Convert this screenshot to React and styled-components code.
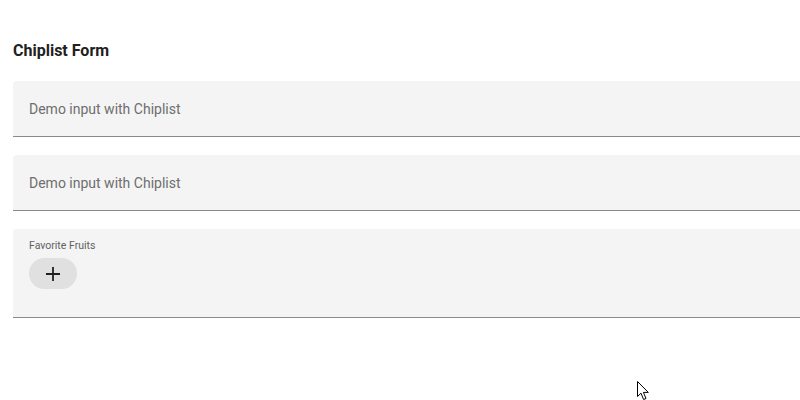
import React from 'react';
import styled, { createGlobalStyle } from 'styled-components';

const GlobalStyle = createGlobalStyle`
  html, body {
    margin: 0;
    padding: 0;
    background: #ffffff;
    overflow: hidden;
  }
  body {
    font-family: Roboto, "Liberation Sans", sans-serif;
  }
`;

const Page = styled.div`
  position: relative;
  width: 800px;
  height: 400px;
  padding: 39px 0 0 13px;
  box-sizing: border-box;
`;

const Title = styled.h1`
  margin: 0 0 18px;
  font-size: 16px;
  line-height: 24px;
  font-weight: 700;
  color: #212121;
`;

const Form = styled.div`
  display: flex;
  flex-direction: column;
  gap: 18px;
  width: 800px;
`;

const Field = styled.div`
  height: ${(p) => p.height}px;
  box-sizing: border-box;
  background: #f4f4f4;
  border-radius: 4px 4px 0 0;
  border-bottom: 1px solid #8a8a8a;
  padding: ${(p) => (p.labelled ? '10px 16px 0' : '0 16px')};
  display: flex;
  flex-direction: column;
  justify-content: ${(p) => (p.labelled ? 'flex-start' : 'center')};
`;

const Placeholder = styled.span`
  font-size: 14px;
  color: #6e6e6e;
`;

const Label = styled.span`
  font-size: 10.5px;
  line-height: 14px;
  color: #616161;
`;

const ChipRow = styled.div`
  display: flex;
  gap: 8px;
  margin-top: 5px;
`;

const AddChip = styled.button`
  width: 48px;
  height: 31px;
  border: none;
  border-radius: 16px;
  background: #e0e0e0;
  display: flex;
  align-items: center;
  justify-content: center;
  padding: 0;
  cursor: pointer;
`;

const Cursor = styled.svg`
  position: absolute;
  left: 637px;
  top: 381px;
`;

const PlusIcon = () => (
  <svg width="16" height="16" viewBox="0 0 16 16">
    <path d="M8 1v14M1 8h14" stroke="#231f20" strokeWidth="1.8" />
  </svg>
);

const App = () => (
  <Page>
    <GlobalStyle />
    <Title>Chiplist Form</Title>
    <Form>
      <Field height={56}>
        <Placeholder>Demo input with Chiplist</Placeholder>
      </Field>
      <Field height={56}>
        <Placeholder>Demo input with Chiplist</Placeholder>
      </Field>
      <Field height={89} labelled>
        <Label>Favorite Fruits</Label>
        <ChipRow>
          <AddChip aria-label="add">
            <PlusIcon />
          </AddChip>
        </ChipRow>
      </Field>
    </Form>
    <Cursor width="13" height="20" viewBox="0 0 13 20">
      <path
        d="M0.5 0.5 L0.5 15.5 L4 12.2 L6.6 18.5 L9 17.5 L6.4 11.4 L11.3 11.4 Z"
        fill="#ffffff"
        stroke="#000000"
        strokeWidth="1"
        strokeLinejoin="miter"
      />
    </Cursor>
  </Page>
);

export default App;
